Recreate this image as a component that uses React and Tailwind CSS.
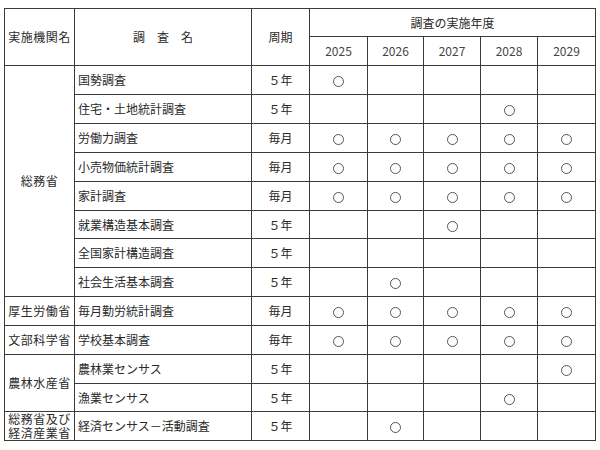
import React from "react";

const YEARS = ["2025", "2026", "2027", "2028", "2029"];
const ALL = YEARS;

const rows = [
  { org: "総務省", span: 8, name: "国勢調査", cycle: "５年", marks: ["2025"] },
  { name: "住宅・土地統計調査", cycle: "５年", marks: ["2028"] },
  { name: "労働力調査", cycle: "毎月", marks: ALL },
  { name: "小売物価統計調査", cycle: "毎月", marks: ALL },
  { name: "家計調査", cycle: "毎月", marks: ALL },
  { name: "就業構造基本調査", cycle: "５年", marks: ["2027"] },
  { name: "全国家計構造調査", cycle: "５年", marks: [] },
  { name: "社会生活基本調査", cycle: "５年", marks: ["2026"] },
  { org: "厚生労働省", span: 1, name: "毎月勤労統計調査", cycle: "毎月", marks: ALL },
  { org: "文部科学省", span: 1, name: "学校基本調査", cycle: "毎年", marks: ALL },
  { org: "農林水産省", span: 2, name: "農林業センサス", cycle: "５年", marks: ["2029"] },
  { name: "漁業センサス", cycle: "５年", marks: ["2028"] },
  { org: "総務省及び\n経済産業省", span: 1, name: "経済センサス－活動調査", cycle: "５年", marks: ["2026"] },
];

const heights = [29, 29, 29, 29, 29, 28, 29, 29, 29, 29, 29, 28, 29];

const cell = "border border-[#3a3a3a] p-0";

export default function App() {
  return (
    <div
      className="w-[600px] h-[450px] bg-white pt-[8px] pl-[4px] text-[12px] text-[#2a2a2a] leading-[14px]"
      style={{ fontFamily: '"Noto Sans CJK JP", "Liberation Sans", sans-serif' }}
    >
      <table className="table-fixed border-collapse w-[591px] border border-[#7a7a7a]">
        <colgroup>
          <col className="w-[70px]" />
          <col className="w-[177px]" />
          <col className="w-[58px]" />
          <col className="w-[58px]" />
          <col className="w-[56px]" />
          <col className="w-[57px]" />
          <col className="w-[57px]" />
          <col className="w-[58px]" />
        </colgroup>
        <thead>
          <tr>
            <th rowSpan={2} className={`${cell} font-normal text-center tracking-[0.5px]`}>
              実施機関名
            </th>
            <th rowSpan={2} className={`${cell} font-normal text-center`}>
              調　査　名
            </th>
            <th rowSpan={2} className={`${cell} font-normal text-center`}>
              周期
            </th>
            <th colSpan={5} className={`${cell} h-[28px] font-normal text-center`}>
              調査の実施年度
            </th>
          </tr>
          <tr>
            {YEARS.map((y) => (
              <th key={y} className={`${cell} h-[29px] font-normal text-center text-[#444]`}>
                {y}
              </th>
            ))}
          </tr>
        </thead>
        <tbody>
          {rows.map((r, i) => (
            <tr key={r.name}>
              {r.org && (
                <td
                  rowSpan={r.span}
                  className={`${cell} text-center whitespace-pre-line tracking-[0.5px]`}
                >
                  {r.org}
                </td>
              )}
              <td className={`${cell} pl-[3px]`} style={{ height: heights[i] }}>
                {r.name}
              </td>
              <td className={`${cell} text-center`}>{r.cycle}</td>
              {YEARS.map((y) => (
                <td key={y} className={`${cell} text-center`}>
                  {r.marks.includes(y) && (
                    <span className="inline-block align-middle w-[11px] h-[11px] rounded-full border border-[#555]" />
                  )}
                </td>
              ))}
            </tr>
          ))}
        </tbody>
      </table>
    </div>
  );
}
